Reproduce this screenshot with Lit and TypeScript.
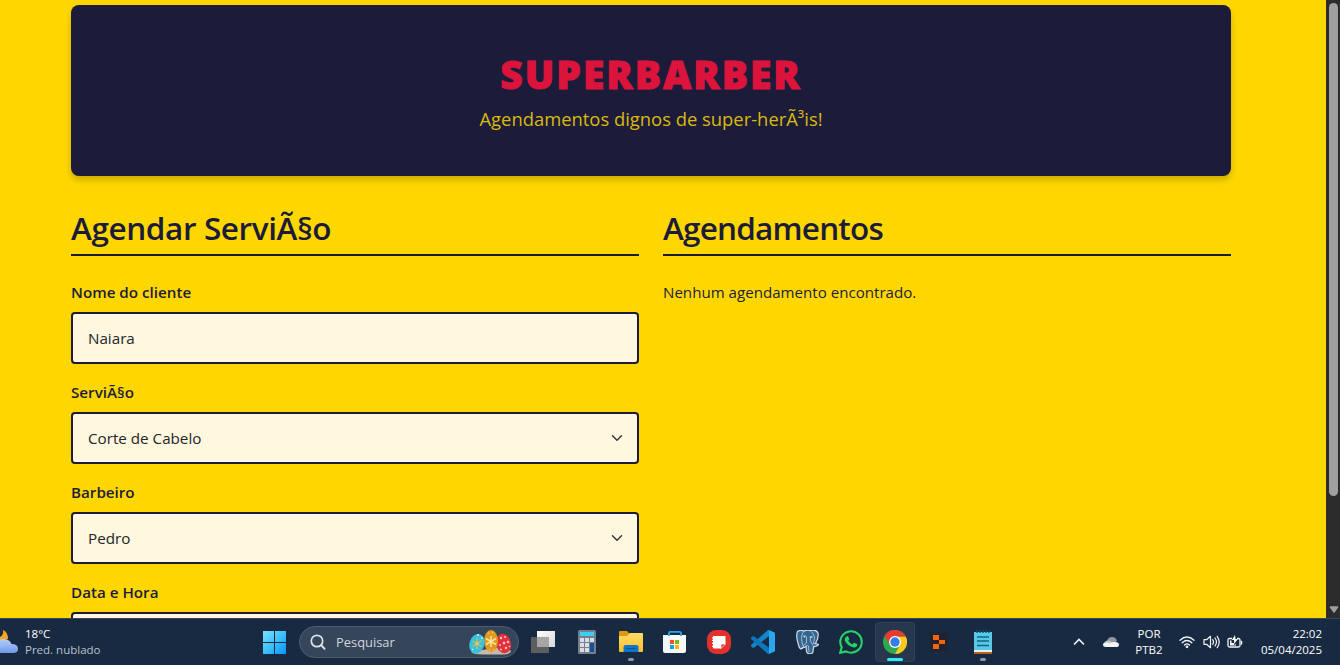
import { LitElement, html, css, svg, TemplateResult } from "lit";
import { customElement } from "lit/decorators.js";

const icon = (body: TemplateResult, w = 24, h = 24) =>
  html`<svg width=${w} height=${h} viewBox="0 0 ${w} ${h}" fill="none">${body}</svg>`;

const caret = icon(svg`<path d="M2 5l6 6 6-6" stroke="#343a40" stroke-width="2" stroke-linecap="round" stroke-linejoin="round" transform="scale(.75)"/>`, 12, 12);

const weather = icon(svg`
  <defs><linearGradient id="wc" x1="0" y1="0" x2="0" y2="1"><stop stop-color="#b5cdf8"/><stop offset="1" stop-color="#6f9bea"/></linearGradient></defs>
  <path d="M3 0q5 2 5 9l-8 2V7q4-2 3-7z" fill="#f6a623"/>
  <path d="M-4 23a6 6 0 0 1 0-9q2-5 8-5 6 .5 7.500 5 6.500 0 6.500 4.700Q18 23 13 23z" fill="url(#wc)"/>
  <path d="M0 17q5-4 10-3" stroke="#9dbbf4" stroke-width="1.500"/>`, 18, 24);

const start = icon(svg`
  <defs><linearGradient id="win" x1="0" y1="0" x2="1" y2="1"><stop stop-color="#7ddffc"/><stop offset=".55" stop-color="#38bdfb"/><stop offset="1" stop-color="#0a91fb"/></linearGradient></defs>
  <path d="M1 1h11v11H1zM13 1h11v11H13zM1 13h11v11H1zM13 13h11v11H13z" fill="url(#win)"/>`);

const magnifier = icon(svg`<circle cx="7" cy="7" r="5.700" stroke="#dde2e8" stroke-width="1.700"/><path d="M11 11l3.600 3.800" stroke="#dde2e8" stroke-width="1.900" stroke-linecap="round"/>`, 16, 16);

const eggs = icon(svg`
  <path d="M2 23q2 2.500 12 2.500h18q10 0 10-4l-14-3z" fill="#c9b8ad"/>
  <ellipse cx="34.500" cy="14.500" rx="7.500" ry="9.800" transform="rotate(-14 34.500 14.500)" fill="#e2313c"/>
  <g fill="#ffc9c4"><circle cx="32" cy="9" r="1.200"/><circle cx="36" cy="8" r="1"/><circle cx="39" cy="13" r="1.200"/><circle cx="35" cy="14" r="1.300"/><circle cx="31" cy="16" r="1"/><circle cx="37" cy="19" r="1.200"/><circle cx="32" cy="20.500" r="1"/><circle cx="40.500" cy="17.500" r=".8"/></g>
  <ellipse cx="22" cy="12" rx="7" ry="11" fill="#e09a1e"/>
  <path d="M22 7v11M17 9.500l10 6M27 9.500l-10 6" stroke="#ffe2a0" stroke-width="1.500"/>
  <path d="M19 4l1 .5M23 3l1 1M20 21h1M25 20l-1 .5" stroke="#f7cb6a" stroke-width="1.300"/>
  <ellipse cx="8" cy="14.800" rx="7.500" ry="10" transform="rotate(16 8 14.800)" fill="#37c1dd"/>
  <path d="M8 9v11M3.500 12l9 5.500M12.500 11.500l-9 6" stroke="#c8bd69" stroke-width="1.400"/>
  <circle cx="8" cy="14.500" r="1.800" fill="#ecc65a"/>
  <path d="M8 6h2M13 8v2M3 20l1 1" stroke="#c7f6f8" stroke-width="1.300"/>`, 44, 26);

const taskView = icon(svg`
  <defs><linearGradient id="tv" x1="0" y1="0" x2="1" y2="1"><stop stop-color="#fff"/><stop offset="1" stop-color="#d7d7d7"/></linearGradient></defs>
  <path d="M0 7h18v16H0z" fill="#5d5d5d"/><path d="M6 1h18v16H6z" fill="url(#tv)"/><path d="M6 7h12v10H6z" fill="#a6a6a6"/>`);

const calculator = icon(svg`
  <rect x="3" y="0" width="18" height="24" rx="1.500" fill="#75808c"/><path d="M5 2h14v4H5z" fill="#3dcdf5"/>
  <path d="M5 8h4v4H5zM10 8h4v4h-4zM15 8h4v4h-4zM5 13h4v4H5zM10 13h4v4h-4zM5 18h4v4H5zM10 18h4v4h-4z" fill="#d9dfe5"/><path d="M15 13h4v9h-4z" fill="#155196"/>`);

const explorer = icon(svg`
  <defs><linearGradient id="fo" x1="0" y1="0" x2="0" y2="1"><stop stop-color="#ffdc68"/><stop offset="1" stop-color="#ffbe28"/></linearGradient></defs>
  <path d="M0 2q0-1 1-1h7l2.500 2.500H15V9H0z" fill="#dc9a0c"/><path d="M0 6h8l3-3h12q1 0 1 1v17q0 1-1 1H1q-1 0-1-1z" fill="url(#fo)"/>
  <path d="M4.500 22v-5q0-2 2-2h11q2 0 2 2v5z" fill="#0f75cb"/><path d="M7 18.500h10" stroke="#075399" stroke-width="1"/>`);

const store = icon(svg`
  <path d="M0 5h23v16q0 2-2 2H2q-2 0-2-2z" fill="#f7f8f9"/>
  <path d="M6 6V3q0-1.200 1.200-1.200h9.600Q18 1.800 18 3v3" stroke="#25a9ea" stroke-width="1.800"/><path d="M7 4.500h10V5H7z" fill="#16283f"/>
  <path d="M7 10h4v4H7z" fill="#f25022"/><path d="M12 10h4v4h-4z" fill="#7fba00"/><path d="M7 15h4v4H7z" fill="#00a4ef"/><path d="M12 15h4v4h-4z" fill="#ffb900"/>`);

const notes = icon(svg`
  <rect width="24" height="24" rx="9" fill="#e3312b"/><path d="M6 6h12q.5 0 .5.500V14L14 18.500H7q-1 0-1-1V17H5v-1.300h1V14H5v-1.300h1V11H5V9.700h1V8.500H5V7.200h1z" fill="#fff"/><path d="M18.500 14H15.500q-1.500 0-1.500 1.500v3z" fill="#e3312b" stroke="#fff" stroke-width=".6"/>`);

const vscode = icon(svg`
  <path d="M18 6.300L2.500 18 0 16.500v-1.500L17 0h1z" fill="#1684ca"/><path d="M18 17.700L2.500 6 0 7.500V9l17 15h1z" fill="#0e76bd"/><path d="M18 0v24l6-2.800V2.800z" fill="#29a8f0"/>`);

const postgres = icon(svg`
  <path d="M2.500 1.500Q5-.5 9 1q3-1.200 6-.5 6-1.500 8 2.500 1 4-2.500 10.500l3 1q-1 2-5 2.300l-.5 5q-.5 2-3.500 2-2.500 0-3-2.500l-.5-5q-1.500 1.500-3 1.200Q5 21 3.500 15 .5 6 2.500 1.500z" fill="#336791" stroke="#d5dde6" stroke-width="1.200"/>
  <path d="M9 1Q5.500 5 7 12l1.500 5M15 .5q4 2.500 4.500 7l-1 6 2 .5M8 6q3-1 3.500 1v6l-3 2.500M18 7.500q-2-1.500-3-.5l.5 4 2.500 4.500M11.500 16q1-1 2 0l.5 6" stroke="#d5dde6" stroke-width=".7"/>
  <circle cx="9.500" cy="6.800" r=".7" fill="#fff"/><circle cx="16" cy="7" r=".7" fill="#fff"/>`);

const whatsapp = icon(svg`
  <path d="M1.200 22.800l1.500-5.600A10.700 10.700 0 1 1 7 21.400z" stroke="#25d366" stroke-width="2.100"/>
  <path d="M8 6.200q.8-.3 1.200.4l1 2.300q.1.600-1 1.700 1.500 2.800 4.200 4l1.300-1.500q.4-.5 1-.2l2.400 1.200q.6.400-.1 1.900-1.400 2-4 1.300-5.500-1.500-8-6.300-1.200-3 2-4.800z" fill="#25d366"/>`);

const chrome = icon(svg`
  <circle cx="12" cy="12" r="12" fill="#2da94f"/><path d="M12 6.500h10.700A12 12 0 0 1 12 24l5-9z" fill="#fdc91c"/>
  <path d="M1.600 6A12 12 0 0 1 22.700 6.600H12L7 15z" fill="#e83b30"/>
  <circle cx="12" cy="12" r="6" fill="#fff"/><circle cx="12" cy="12" r="4.700" fill="#357de8"/>`);

const replit = icon(svg`<rect x="3" y="3" width="18" height="18" rx="2" fill="#20232f"/><path d="M6 5h6v5H6zM12 10h6v4h-6zM6 14h6v5H6z" fill="#f56508"/>`);

const notepad = icon(svg`
  <path d="M3 2h18v19H3z" fill="#58c9e8"/><path d="M3 20h18v2H3z" fill="#e6eef2"/><path d="M3 22h18v2H3z" fill="#b9601c"/>
  <path d="M6 0v3M9 0v3M12 0v3M15 0v3M18 0v3" stroke="#114d68" stroke-width="1.400"/><path d="M6 7h12M6 11h12M6 15.500h12" stroke="#146581" stroke-width="1.700"/>`);

const apps: { art: TemplateResult; mark?: string }[] = [
  { art: taskView }, { art: calculator }, { art: explorer, mark: "dot" }, { art: store }, { art: notes },
  { art: vscode }, { art: postgres }, { art: whatsapp }, { art: chrome, mark: "bar" }, { art: replit }, { art: notepad, mark: "dot" },
];

const chevronUp = icon(svg`<path d="M1 7.500L6 2.500l5 5" stroke="#f2f4f6" stroke-width="1.600"/>`, 12, 10);
const cloud = icon(svg`<path d="M1 8q1-2 3-2 1-4 5-4 4 0 5 4L8 10z" fill="#8e969f"/><path d="M2 7q3-2.500 6-.5l4 2-7 2.500z" fill="#c5c9ce"/><path d="M3 12q-3 0-3-2.500Q0 7.500 3 7.500q2 0 3.500 1Q9 6.800 12 7q4 0 4 2.700 0 2.300-3 2.300z" fill="#f4f4f5"/>`, 16, 14);
const wifi = icon(svg`<g stroke="#f3f5f7" stroke-width="1.300" stroke-linecap="round"><path d="M1 5.200q7-6.500 14 0M3.200 7.700q4.800-4.500 9.600 0M5.500 10q2.500-2.200 5 0"/></g><circle cx="8" cy="11.800" r="1.400" fill="#f3f5f7"/>`, 16, 14);
const sound = icon(svg`<g stroke="#f3f5f7" stroke-width="1.200" stroke-linecap="round" stroke-linejoin="round"><path d="M1 4.700h2.500L7.500 1.300v11.400L3.500 9.300H1z"/><path d="M9.700 4.700q1.600 2.300 0 4.600M12 3q3 4 0 8M14.200 1.300q4 5.700 0 11.400"/></g>`, 17, 14);
const battery = icon(svg`<path d="M5 3.500H2.500Q1 3.500 1 5v5.500Q1 12 2.500 12h9q1.500 0 1.500-1.500V5q0-1.500-1.500-1.500H10" stroke="#f3f5f7" stroke-width="1.300"/><path d="M14 6q1.500 1.700 0 3.500" stroke="#f3f5f7" stroke-width="1.300"/><path d="M3 5.500h1.500v2.500h2.500v2l2-1v1.500H3z" fill="#f3f5f7"/><path d="M8 0L4.800 5H7v4l4-5H8.500z" fill="#f3f5f7"/>`, 16, 14);

@customElement("app-root")
export class AppRoot extends LitElement {
  static styles = css`
    :host { display: flex; flex-direction: column; width: 1340px; height: 665px; overflow: hidden; font-family: "Open Sans", "Noto Sans", sans-serif; color: #1c1c3a; }
    * { box-sizing: border-box; }
    svg { display: block; flex: none; }
    .window { display: flex; height: 618px; flex: none; }
    .page { flex: 1; overflow: hidden; background: #ffd700; padding: 5px 95px 0 71px; }
    .hero { height: 171px; border-radius: 8px; background: #1c1c3a; box-shadow: 0 4px 6px rgba(0, 0, 0, .2); padding-top: 45px; text-align: center; }
    h1 { margin: 0; font-size: 39px; line-height: 47px; font-weight: 800; letter-spacing: 2px; color: #dc143c; -webkit-text-stroke: 1px #dc143c; }
    .tagline { margin: 8px 0 0; font-size: 18.400px; line-height: 27px; color: #dbb90c; }
    .columns { display: grid; grid-template-columns: 568px 568px; gap: 24px; padding-top: 33px; }
    h2 { margin: 0 0 24px; height: 47px; border-bottom: 2px solid #1c1c3a; font-size: 31.500px; line-height: 38px; font-weight: 600; letter-spacing: -.4px; white-space: nowrap; }
    .list-title { letter-spacing: -.8px; }
    label { display: block; height: 32px; font-size: 15.200px; line-height: 24px; font-weight: 600; }
    .field { display: flex; align-items: center; justify-content: space-between; height: 52px; margin-bottom: 16px; padding: 0 14px 0 15px; border: 2px solid #1c1c3a; border-radius: 4px; background: #fff7de; font-size: 15.200px; color: #212529; }
    .empty { margin: 0; font-size: 15.120px; line-height: 24px; white-space: nowrap; }
    .scroll { width: 14px; background: #2c2c2c; display: flex; flex-direction: column; justify-content: space-between; align-items: center; padding: 3px 0 4px 1px; }
    .thumb { width: 9px; height: 493px; border-radius: 5px; background: #9f9f9f; }
    .taskbar { display: flex; align-items: center; height: 47px; background: #182a41; border-top: 1px solid #3a4658; color: #fff; font-size: 11.500px; line-height: 16px; white-space: nowrap; }
    .weather { display: flex; align-items: center; gap: 7px; width: 262px; }
    .soft { color: #b9c1cb; }
    .search { display: flex; align-items: center; width: 220px; height: 32px; margin: 0 2px 0 13px; padding: 0 5px 0 10px; border-radius: 16px; border: 1px solid #4e5c6e; background: #36465a; color: #cfd5dc; font-size: 12.900px; }
    .search span { flex: 1; margin-left: 10px; }
    .apps { display: flex; }
    .app { display: flex; flex-direction: column; align-items: center; width: 40px; height: 40px; margin: 0 2px; padding-top: 8px; border-radius: 4px; }
    .active { background: #27384e; box-shadow: inset 0 0 0 1px #2f4056; }
    .dot, .bar { height: 3px; margin-top: 4px; border-radius: 2px; }
    .dot { width: 6px; background: #9099a5; }
    .bar { width: 16px; background: #2cecff; }
    .tray { display: flex; align-items: center; flex: 1; padding-left: 68px; }
    .lang { width: 30px; margin: 0 15px 0 15px; text-align: center; }
    .status { display: flex; gap: 7.500px; }
    .clock { flex: 1; padding-right: 18px; text-align: right; }
    .cloud { margin-left: 18px; }
  `;

  render() {
    return html`
      <div class="window">
        <main class="page">
          <header class="hero"><h1>SUPERBARBER</h1><p class="tagline">Agendamentos dignos de super-herÃ³is!</p></header>
          <div class="columns">
            <section>
              <h2>Agendar ServiÃ§o</h2>
              <label>Nome do cliente</label><div class="field">Naiara</div>
              <label>ServiÃ§o</label><div class="field">Corte de Cabelo ${caret}</div>
              <label>Barbeiro</label><div class="field">Pedro ${caret}</div>
              <label>Data e Hora</label><div class="field"></div>
            </section>
            <section><h2 class="list-title">Agendamentos</h2><p class="empty">Nenhum agendamento encontrado.</p></section>
          </div>
        </main>
        <div class="scroll"><div class="thumb"></div>
          ${icon(svg`<path d="M1.500 1h7l-3.500 5z" fill="#9f9f9f" stroke="#9f9f9f" stroke-width="1.500" stroke-linejoin="round"/>`, 10, 8)}</div>
      </div>
      <footer class="taskbar">
        <div class="weather">${weather}<div>18°C<br /><span class="soft">Pred. nublado</span></div></div>
        ${start}
        <div class="search">${magnifier}<span>Pesquisar</span>${eggs}</div>
        <div class="apps">${apps.map((a) => html`<div class="app ${a.mark === "bar" ? "active" : ""}">${a.art}${a.mark ? html`<div class=${a.mark}></div>` : ""}</div>`)}</div>
        <div class="tray">
          ${chevronUp}<div class="cloud">${cloud}</div>
          <div class="lang">POR<br />PTB2</div>
          <div class="status">${wifi}${sound}${battery}</div>
          <div class="clock">22:02<br />05/04/2025</div>
        </div>
      </footer>`;
  }
}
